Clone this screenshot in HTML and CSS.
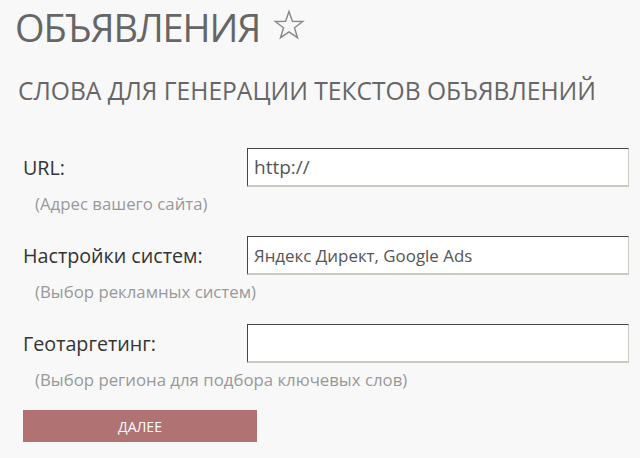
FILE: index.html
```
<!DOCTYPE html>
<html lang="ru">
<head>
<meta charset="utf-8">
<link rel="stylesheet" href="styles.css">
</head>
<body>
<div class="page">
  <h1 class="title"><span class="title-text">ОБЪЯВЛЕНИЯ</span><span class="star"><svg width="32" height="32" viewBox="0 0 32 32"><path d="M16 2.5 L19.4 12.3 L29.8 12.5 L21.5 18.8 L24.5 28.7 L16 22.8 L7.5 28.7 L10.5 18.8 L2.2 12.5 L12.6 12.3 Z" fill="none" stroke="#888" stroke-width="1.4" stroke-linejoin="miter"/></svg></span></h1>
  <h2 class="subtitle">СЛОВА ДЛЯ ГЕНЕРАЦИИ ТЕКСТОВ ОБЪЯВЛЕНИЙ</h2>
  <form class="form">
    <div class="field">
      <div class="row">
        <label class="label">URL:</label>
        <div class="input input-big">http://</div>
      </div>
      <div class="hint">(Адрес вашего сайта)</div>
    </div>
    <div class="field">
      <div class="row">
        <label class="label">Настройки систем:</label>
        <div class="input">Яндекс Директ, Google Ads</div>
      </div>
      <div class="hint">(Выбор рекламных систем)</div>
    </div>
    <div class="field">
      <div class="row">
        <label class="label">Геотаргетинг:</label>
        <div class="input"></div>
      </div>
      <div class="hint">(Выбор региона для подбора ключевых слов)</div>
    </div>
    <button type="button" class="btn">ДАЛЕЕ</button>
  </form>
</div>
</body>
</html>
```
FILE: styles.css
```
html, body {
  margin: 0;
  padding: 0;
  background: #f8f8f8;
}
body {
  font-family: "Open Sans", "DejaVu Sans", sans-serif;
  width: 640px;
  height: 458px;
  overflow: hidden;
}
.page {
  padding: 0 0 0 15px;
}
.title {
  margin: 0;
  padding-top: 1px;
  font-size: 38px;
  font-weight: 400;
  color: #666;
  line-height: 52px;
  display: flex;
  align-items: center;
  gap: 13px;
}
.title-text {
  letter-spacing: -1.1px;
}
.star {
  display: flex;
  margin-top: -4px;
}
.subtitle {
  margin: 23px 0 0 3px;
  font-size: 24.6px;
  font-weight: 400;
  color: #666;
  line-height: 30px;
}
.form {
  margin-top: 42px;
  padding-left: 8px;
}
.field {
  height: 88px;
}
.row {
  display: flex;
  align-items: center;
}
.label {
  width: 224px;
  font-size: 19.7px;
  color: #333;
}
.input {
  box-sizing: border-box;
  width: 382px;
  height: 39px;
  background: #fff;
  border-top: 1px solid #444;
  border-left: 1px solid #444;
  border-right: 1px solid #ccc9c0;
  border-bottom: 2px solid #ccc9c0;
  padding: 0 6px;
  font-size: 16.9px;
  color: #555;
  display: flex;
  align-items: center;
}
.input-big {
  font-size: 19px;
}
.hint {
  margin-top: 5px;
  padding-left: 12px;
  font-size: 16.8px;
  color: #999;
}
.btn {
  display: block;
  margin-top: -2px;
  width: 234px;
  height: 32px;
  border: 0;
  background: #b07272;
  color: #fff;
  font-family: "Open Sans", sans-serif;
  font-size: 14px;
  padding: 0;
}
```
